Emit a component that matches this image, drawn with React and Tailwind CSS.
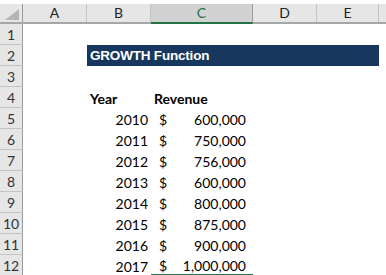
import React from "react";

const cols = [
  { k: "A", w: "w-[64px]" },
  { k: "B", w: "w-[64px]" },
  { k: "C", w: "w-[102px]", sel: true },
  { k: "D", w: "w-[64px]" },
  { k: "E", w: "w-[62px]" },
];

const data = [
  ["2010", "600,000"],
  ["2011", "750,000"],
  ["2012", "756,000"],
  ["2013", "600,000"],
  ["2014", "800,000"],
  ["2015", "875,000"],
  ["2016", "900,000"],
  ["2017", "1,000,000"],
];

const font = { fontFamily: "Lato, 'Noto Sans', sans-serif" };

function RowHead({ n }) {
  return (
    <div className="w-[23px] h-[21px] shrink-0 bg-[#e6e6e6] border-r border-r-[#9b9b9b] border-b border-b-[#c4c4c4] flex items-end justify-center pb-[1px] text-[14px] leading-[16px] text-[#333]">
      {n}
    </div>
  );
}

export default function App() {
  const rows = [];
  for (let i = 1; i <= 12; i++) {
    let content = null;
    if (i === 2) {
      content = (
        <div className="ml-[64px] w-[292px] h-[21px] bg-[#17375e] flex items-center pl-[3px]">
          <span
            className="text-white font-bold text-[13.5px] leading-none tracking-[-0.2px]"
            style={{ fontFamily: "'Liberation Sans', Arial, sans-serif" }}
          >
            GROWTH Function
          </span>
        </div>
      );
    } else if (i === 4) {
      content = (
        <div className="flex h-[21px] items-end pb-[1px] font-bold text-[14px] leading-[16px] text-black">
          <div className="ml-[64px] w-[64px] pl-[3px]">Year</div>
          <div className="pl-[3px]">Revenue</div>
        </div>
      );
    } else if (i >= 5) {
      const [y, v] = data[i - 5];
      content = (
        <div className="flex h-[21px] items-start text-[14px] leading-[16px] text-black">
          <div className="ml-[64px] w-[64px] h-[21px] flex items-end pb-[1px] justify-end pr-[3px]">{y}</div>
          <div
            className={
              "w-[102px] flex justify-between pl-[8px] pr-[7px] items-end " +
              (i === 12 ? "h-[20px] border-b border-b-[#217346]" : "h-[21px] pb-[1px]")
            }
          >
            <span>$</span>
            <span>{v}</span>
          </div>
        </div>
      );
    }
    rows.push(
      <div key={i} className="flex h-[21px]">
        <RowHead n={i} />
        <div className="flex-1 h-[21px] bg-white">{content}</div>
      </div>
    );
  }

  return (
    <div className="w-[386px] h-[275px] overflow-hidden bg-white" style={font}>
      <div className="pt-[4px] bg-white">
        <div className="flex h-[20px] bg-[#e6e6e6] border-b-2 border-b-[#a6a6a6]">
          <div className="w-[23px] shrink-0 border-r border-r-[#9b9b9b] relative">
            <svg width="14" height="11" className="absolute left-[5px] top-[5px]">
              <polygon points="14,0 14,11 0,11" fill="#b5b5b5" />
            </svg>
          </div>
          {cols.map((c) => (
            <div
              key={c.k}
              className={
                c.w +
                " shrink-0 flex items-center justify-center text-[14px] leading-none border-r " +
                (c.sel
                  ? "bg-[#d2d2d2] text-[#217346] border-r-[#9b9b9b] -mb-[2px] border-b-2 border-b-[#217346]"
                  : "text-[#222] border-r-[#c4c4c4]")
              }
            >
              {c.k}
            </div>
          ))}
          <div className="flex-1" />
        </div>
      </div>
      {rows}
    </div>
  );
}
